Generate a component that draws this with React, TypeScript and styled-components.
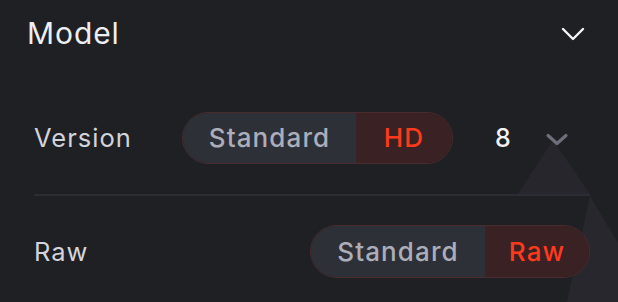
import React from "react";
import styled, { createGlobalStyle } from "styled-components";

const Global = createGlobalStyle`
  html, body { margin: 0; padding: 0; background: #1f2024; }
  body { font-family: Inter, "Noto Sans", sans-serif; -webkit-font-smoothing: antialiased; }
`;

const Panel = styled.div`
  position: relative;
  width: 618px;
  height: 302px;
  overflow: hidden;
  background: #1f2024;
  box-sizing: border-box;
  padding: 0 28px 0 27px;
`;

const Decor = styled.svg`
  position: absolute;
  left: 0;
  top: 0;
  width: 618px;
  height: 302px;
  pointer-events: none;
  z-index: 0;
`;

const Content = styled.div`
  position: relative;
  z-index: 1;
  display: flex;
  flex-direction: column;
`;

const Header = styled.div`
  height: 68px;
  display: flex;
  align-items: center;
  justify-content: space-between;
`;

const Title = styled.div`
  font-size: 30px;
  font-weight: 400;
  color: #eceef2;
  letter-spacing: 0.9px;
  line-height: 1;
  margin-top: -2px;
`;

const Body = styled.div`
  display: flex;
  flex-direction: column;
  padding: 44px 0 0 7px;
`;

const Row = styled.div`
  display: flex;
  align-items: center;
  height: 52px;
`;

const Label = styled.div<{ $w?: number }>`
  width: ${(p) => (p.$w ? `${p.$w}px` : "auto")};
  flex: ${(p) => (p.$w ? "none" : "1")};
  font-size: 25.5px;
  color: #d2d4da;
  letter-spacing: 1px;
  line-height: 1;
`;

const Pill = styled.div<{ $h: number }>`
  display: flex;
  height: ${(p) => p.$h}px;
  box-sizing: border-box;
  border: 1.5px solid #4a2b2e;
  border-radius: 999px;
  overflow: hidden;
`;

const Segment = styled.div<{ $active?: boolean; $w: number }>`
  width: ${(p) => p.$w}px;
  display: flex;
  align-items: center;
  justify-content: center;
  background: ${(p) => (p.$active ? "#3a2123" : "#2e3038")};
  color: ${(p) => (p.$active ? "#ff3a1c" : "#abaeb9")};
  font-size: 26px;
  font-weight: 500;
  letter-spacing: 1.1px;
  line-height: 1;
`;

const Count = styled.div`
  margin-left: 42px;
  font-size: 25px;
  font-weight: 500;
  color: #f1f2f5;
  line-height: 1;
`;

const SelectChevron = styled.div`
  margin-left: 34px;
  margin-top: 2px;
  display: flex;
`;

const Divider = styled.div`
  height: 2px;
  margin: 30px 0 0 0;
  width: 556px;
  background: #2c2d34;
`;

const Row2 = styled(Row)`
  margin-top: 29px;
  height: 53px;
`;

export default function App() {
  return (
    <>
      <Global />
      <Panel>
        <Decor viewBox="0 0 618 302">
          <polygon points="553,140 518,194 590,194" fill="#27262c" />
          <polygon points="590,196 618,243 618,302 567,302" fill="#28272d" />
        </Decor>
        <Content>
          <Header>
            <Title>Model</Title>
            <svg width="24" height="14" viewBox="0 0 24 14" style={{ marginRight: 5 }}>
              <path d="M2 2 L12 12 L22 2" fill="none" stroke="#f4f5f7" strokeWidth="2.4" strokeLinecap="round" strokeLinejoin="round" />
            </svg>
          </Header>
          <Body>
            <Row>
              <Label $w={148}>Version</Label>
              <Pill $h={52}>
                <Segment $w={173}>Standard</Segment>
                <Segment $w={96} $active>HD</Segment>
              </Pill>
              <Count>8</Count>
              <SelectChevron>
                <svg width="24" height="13" viewBox="0 0 24 13">
                  <path d="M3 2.5 L12 10.5 L21 2.5" fill="none" stroke="#6c6f79" strokeWidth="3.2" strokeLinecap="round" strokeLinejoin="round" />
                </svg>
              </SelectChevron>
            </Row>
            <Divider />
            <Row2>
              <Label>Raw</Label>
              <Pill $h={53}>
                <Segment $w={174}>Standard</Segment>
                <Segment $w={104} $active>Raw</Segment>
              </Pill>
            </Row2>
          </Body>
        </Content>
      </Panel>
    </>
  );
}
